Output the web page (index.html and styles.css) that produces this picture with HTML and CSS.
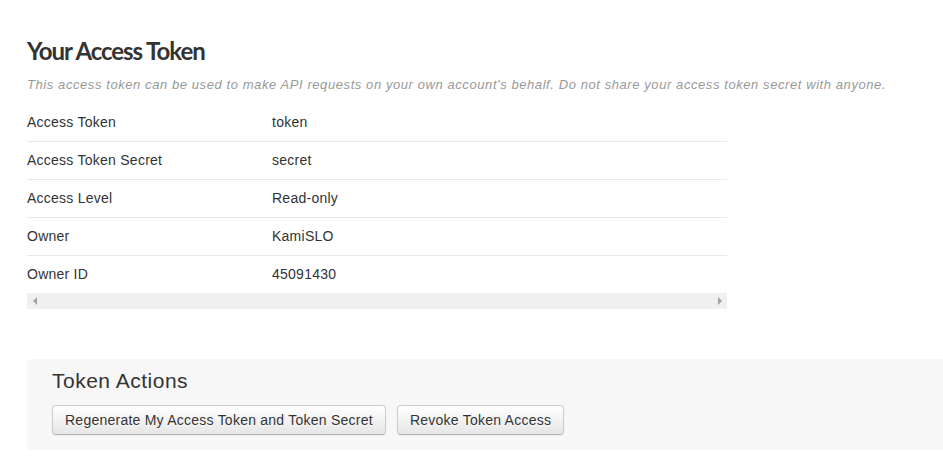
FILE: index.html
```html
<!DOCTYPE html>
<html>
<head>
<meta charset="utf-8">
<link rel="stylesheet" href="styles.css">
</head>
<body>
<div class="page">
  <h1 class="title">Your Access Token</h1>
  <p class="lead">This access token can be used to make API requests on your own account's behalf. Do not share your access token secret with anyone.</p>
  <div class="table-wrap">
    <table class="details">
      <tr><td class="key">Access Token</td><td>token</td></tr>
      <tr><td class="key">Access Token Secret</td><td>secret</td></tr>
      <tr><td class="key">Access Level</td><td>Read-only</td></tr>
      <tr><td class="key">Owner</td><td>KamiSLO</td></tr>
      <tr><td class="key">Owner ID</td><td>45091430</td></tr>
    </table>
    <div class="hscroll">
      <span class="arrow arrow-left"></span>
      <span class="arrow arrow-right"></span>
    </div>
  </div>
  <div class="actions">
    <h2 class="actions-title">Token Actions</h2>
    <div class="buttons">
      <button class="btn">Regenerate My Access Token and Token Secret</button>
      <button class="btn">Revoke Token Access</button>
    </div>
  </div>
</div>
</body>
</html>
```

FILE: styles.css
```css
html, body {
  margin: 0;
  padding: 0;
  background: #fff;
  overflow: hidden;
}
body {
  font-family: "Liberation Sans", Arial, sans-serif;
  font-size: 14px;
  color: #333;
}
.page {
  padding: 37px 0 0 27px;
}
.title {
  margin: 0;
  font-family: Lato, "Liberation Sans", sans-serif;
  font-weight: 700;
  font-size: 24px;
  line-height: 28px;
  letter-spacing: -1.05px;
  color: #333;
}
.lead {
  margin: 10px 0 0 0;
  font-size: 13px;
  line-height: 20px;
  letter-spacing: 0.58px;
  font-style: italic;
  color: #999;
}
.table-wrap {
  width: 700px;
  margin-top: 9px;
}
.details {
  width: 700px;
  border-collapse: collapse;
  letter-spacing: 0.25px;
}
.details td {
  padding: 8px 0;
  line-height: 21px;
  vertical-align: top;
}
.details tr + tr td {
  border-top: 1px solid #e9e9e9;
}
.details td.key {
  width: 245px;
}
.hscroll {
  height: 16px;
  background: #f0f0f0;
  display: flex;
  align-items: center;
  justify-content: space-between;
  padding: 0 5px 0 6px;
  box-sizing: border-box;
}
.arrow {
  width: 0;
  height: 0;
  border-top: 4px solid transparent;
  border-bottom: 4px solid transparent;
}
.arrow-left {
  border-right: 4px solid #a3a3a3;
}
.arrow-right {
  border-left: 4px solid #a3a3a3;
}
.actions {
  margin-top: 50px;
  background: #f7f7f7;
  border-radius: 4px 0 0 4px;
  padding: 10px 0 15px 25px;
}
.actions-title {
  margin: 0;
  font-size: 21px;
  font-weight: 400;
  line-height: 24px;
  letter-spacing: 0.5px;
  color: #333;
}
.buttons {
  display: flex;
  gap: 11px;
  margin-top: 12px;
}
.btn {
  font-family: "Liberation Sans", Arial, sans-serif;
  font-size: 14px;
  line-height: 20px;
  letter-spacing: 0.24px;
  padding: 4px 12px;
  color: #333;
  text-shadow: 0 1px 1px rgba(255,255,255,0.75);
  background: linear-gradient(to bottom, #ffffff, #e6e6e6);
  border: 1px solid #cccccc;
  border-bottom-color: #b3b3b3;
  border-radius: 4px;
  box-shadow: inset 0 1px 0 rgba(255,255,255,0.2), 0 1px 2px rgba(0,0,0,0.05);
  cursor: pointer;
}
```
